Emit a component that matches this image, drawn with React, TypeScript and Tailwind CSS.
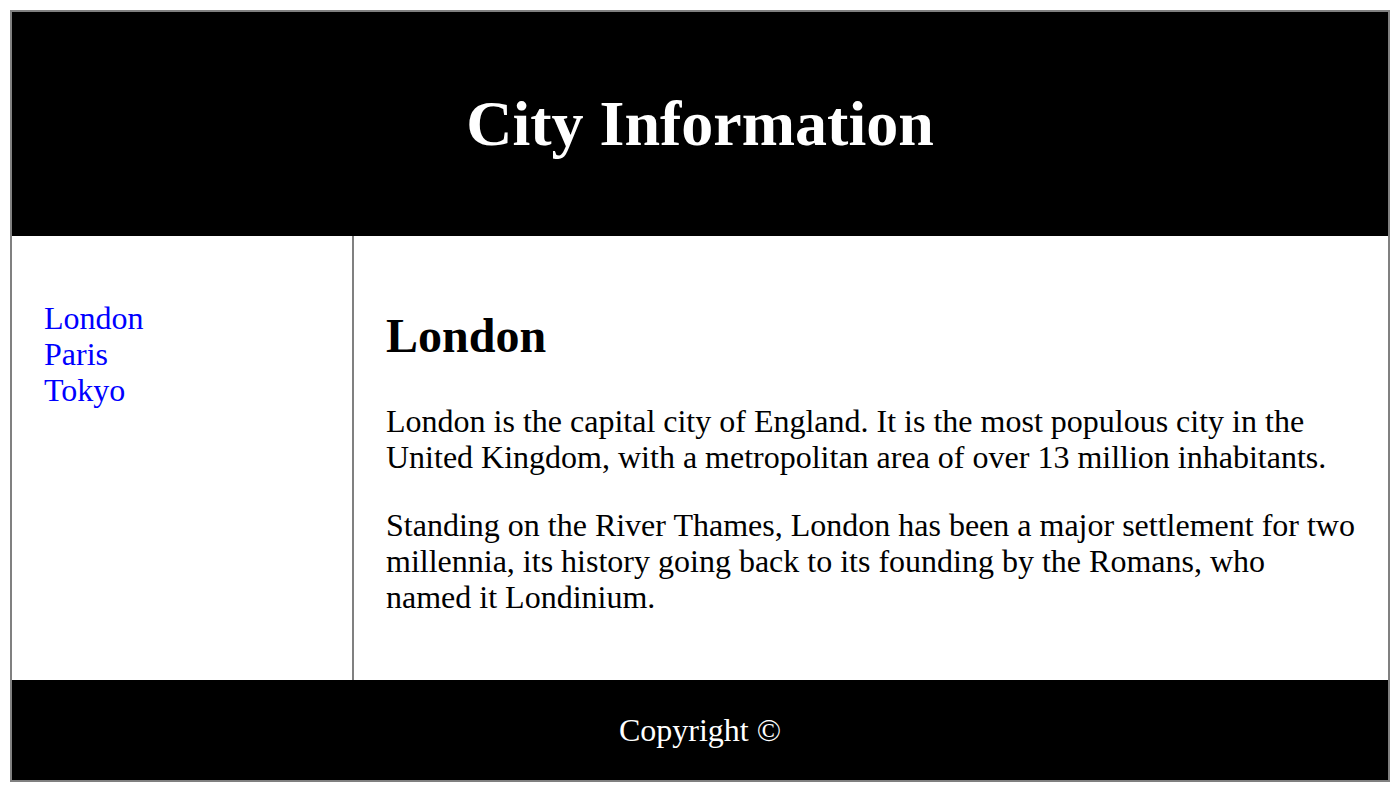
export default function App() {
  const serif = { fontFamily: '"Liberation Serif", "Times New Roman", serif' };
  return (
    <div style={serif} className="bg-white min-h-[788px] pt-[10px] pl-[10px] text-[32px] leading-[36px] text-black">
      <div className="w-[1380px] border-2 border-[#808080] flex flex-col">
        <header className="bg-black text-white text-center h-[224px] flex items-center justify-center">
          <h1 className="text-[64px] font-bold leading-[74px]">City Information</h1>
        </header>
        <div className="flex">
          <nav className="w-[342px] shrink-0 border-r-2 border-[#808080] p-8">
            <ul className="mt-8 flex flex-col">
              <li><a href="#" className="text-[#0000ff]">London</a></li>
              <li><a href="#" className="text-[#0000ff]">Paris</a></li>
              <li><a href="#" className="text-[#0000ff]">Tokyo</a></li>
            </ul>
          </nav>
          <main className="flex-1 px-8 pt-8 pb-[33px]">
            <h2 className="text-[48px] font-bold leading-[55px] mt-[40px] mb-[40px]">London</h2>
            <p className="mb-8">London is the capital city of England. It is the most populous city in the United Kingdom, with a metropolitan area of over 13 million inhabitants.</p>
            <p className="mt-8 mb-8">Standing on the River Thames, London has been a major settlement for two millennia, its history going back to its founding by the Romans, who named it Londinium.</p>
          </main>
        </div>
        <footer className="bg-black text-white text-center h-[100px] flex items-center justify-center">
          <span>Copyright ©</span>
        </footer>
      </div>
    </div>
  );
}
